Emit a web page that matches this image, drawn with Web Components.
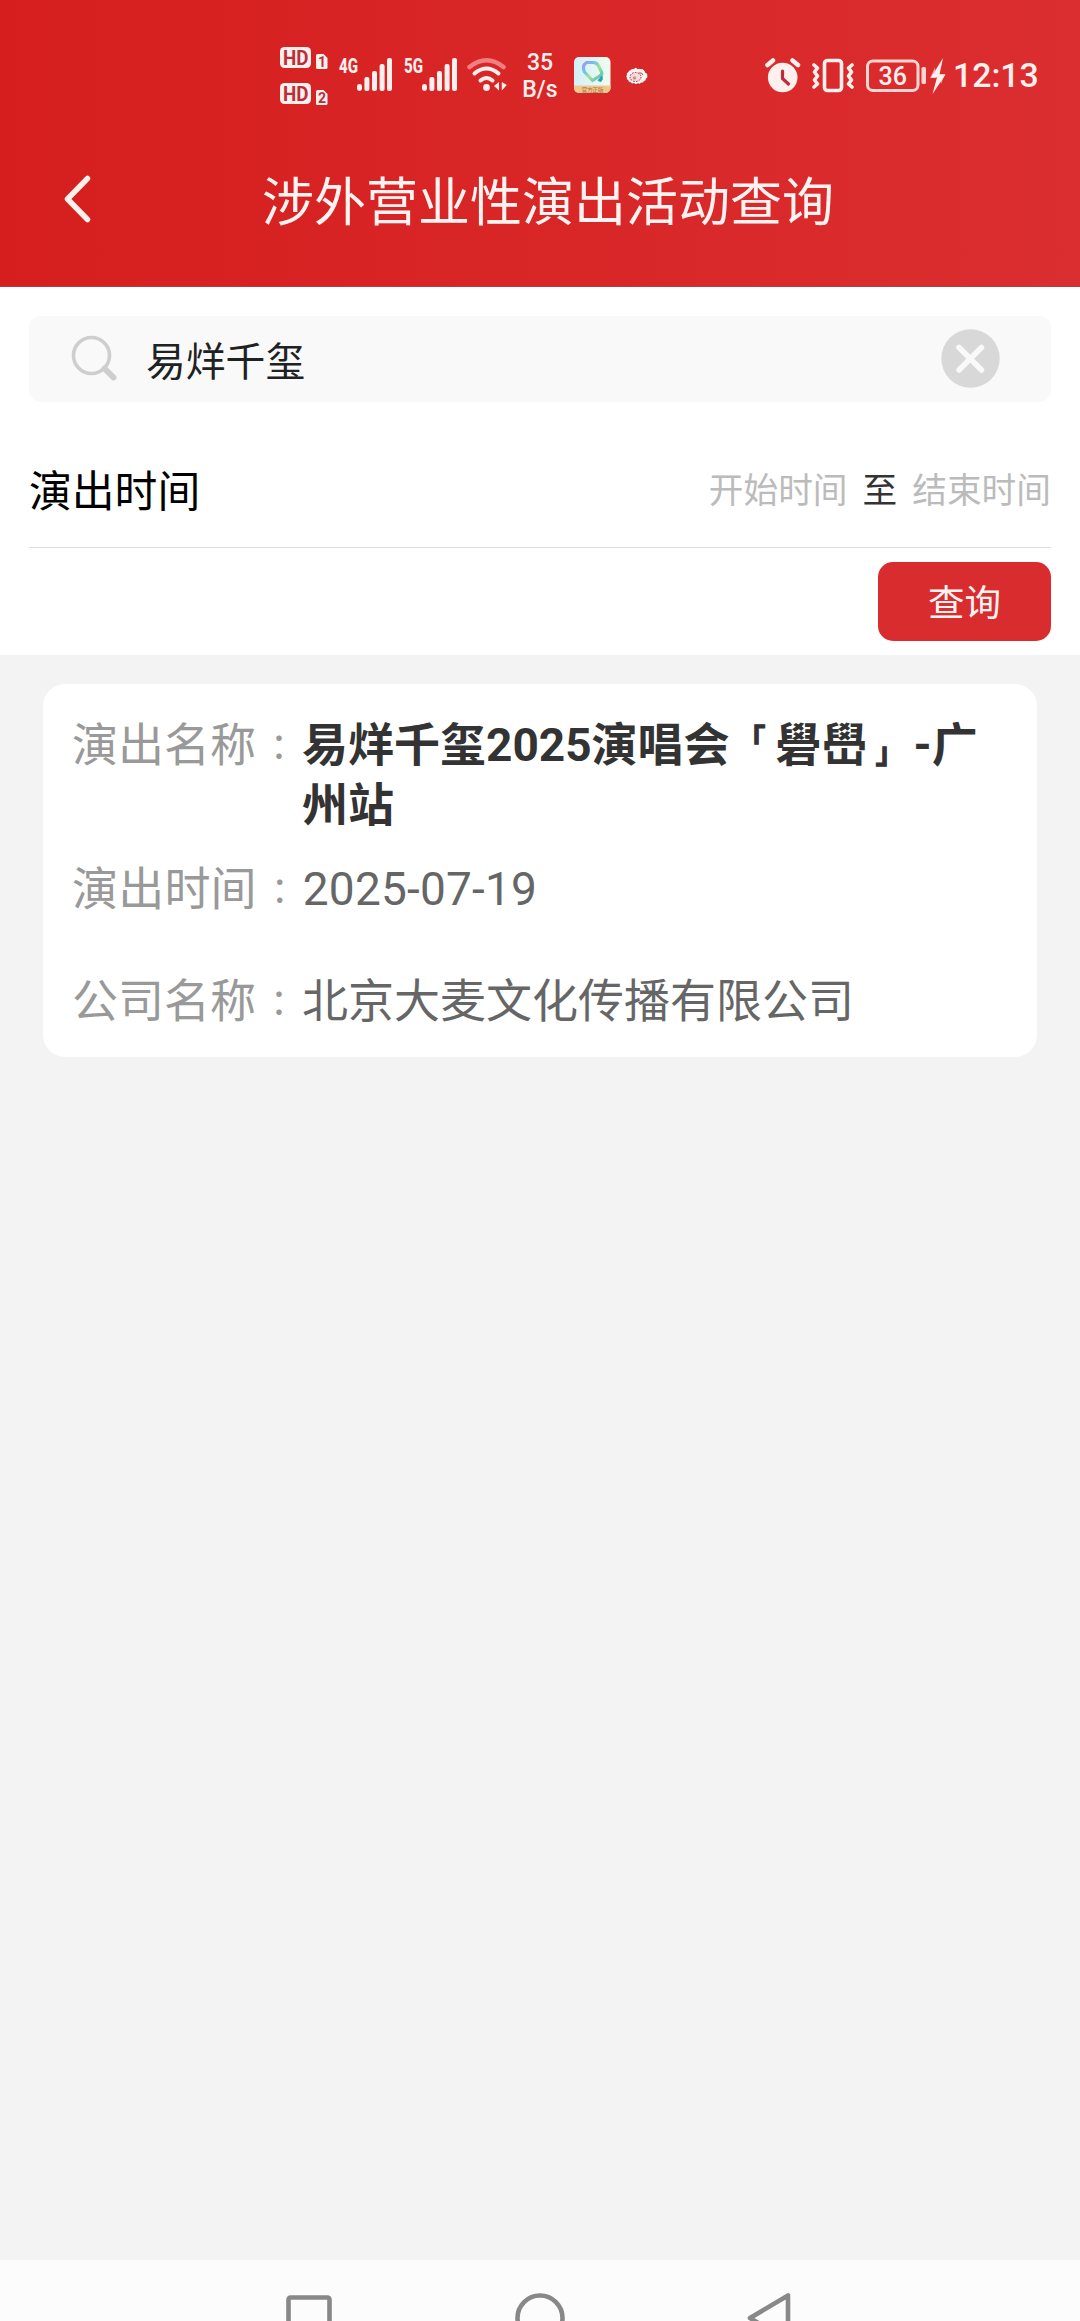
<!DOCTYPE html>
<html lang="zh-CN">
<head>
<meta charset="UTF-8">
<meta name="viewport" content="width=device-width, initial-scale=1">
<title>涉外营业性演出活动查询</title>
<style>
  body {
    margin: 0;
    background: #f3f3f3;
    font-family: Roboto, 'Noto Sans CJK SC', sans-serif;
    text-spacing-trim: space-all;
  }
</style>
</head>
<body>
<query-page></query-page>

<script>
// Small helper: attach an open shadow root with the given markup
function define(name, html, setup) {
  const template = document.createElement('template');
  template.innerHTML = html.trim();

  customElements.define(name, class extends HTMLElement {
    constructor() {
      super();
      this.attachShadow({ mode: 'open' });
      this.shadowRoot.appendChild(template.content.cloneNode(true));
    }

    connectedCallback() {
      if (setup) setup(this, this.shadowRoot);
    }
  });
}

// <signal-bars net="4G">
define('signal-bars', `
<style>
  :host { display: block; width: 53px; height: 60px; }
  svg { display: block; }
</style>
<svg width="53" height="60" viewBox="0 0 53 60" fill="#fff0ee">
  <text id="net" x="0" y="27" font-size="20.5" font-weight="800" textLength="19" lengthAdjust="spacingAndGlyphs"></text>
  <rect x="18" y="38" width="5" height="7" rx="2.4"/>
  <rect x="25.4" y="31" width="5" height="14" rx="2"/>
  <rect x="33" y="25" width="5" height="20" rx="2"/>
  <rect x="40.6" y="18" width="5" height="27" rx="2"/>
  <rect x="48" y="12" width="5" height="33" rx="2"/>
</svg>
`, (host, root) => {
  root.getElementById('net').textContent = host.getAttribute('net');
});

// Phone status bar
define('status-bar', `
<style>
  :host {
    display: flex;
    justify-content: space-between;
    box-sizing: border-box;
    height: 114px;
    padding: 46px 42px 0 280px;
    color: #fff0ee;
  }
  .group { display: flex; }
  svg { display: block; }
  .hd { margin-right: 11px; }
  .sig1 { margin-right: 12px; }
  .sig2 { margin-right: 10px; }
  .speed {
    width: 36px;
    margin: 3px 16px 0 14px;
    font-size: 23px;
    font-weight: 500;
    line-height: 27px;
    text-align: center;
    white-space: nowrap;
  }
  .weibo { margin-left: 14px; }
  .alarm { margin-right: 11px; }
  .vibrate { margin-right: 12px; }
  .battery { margin-right: 3px; }
  .bolt { margin-right: 7px; }
  .clock {
    width: 85px;
    font-size: 33.800px;
    font-weight: 500;
    line-height: 60px;
    white-space: nowrap;
  }
</style>
<div class="group">
  <svg class="hd" width="48" height="60" viewBox="0 0 48 60">
    <g fill="#fff0ee">
      <rect x="0" y="1" width="31" height="21" rx="4.5"/>
      <path d="M36 9.5q0-1.500 1.500-1.500h6l4 4v9.500q0 1.500-1.500 1.500h-8.500q-1.500 0-1.500-1.500z"/>
      <rect x="0" y="37" width="31" height="21" rx="4.500"/>
      <path d="M36 45.500q0-1.500 1.500-1.500h6l4 4v9.500q0 1.500-1.500 1.500h-8.500q-1.500 0-1.500-1.500z"/>
    </g>
    <g fill="#b92f38" font-weight="700">
      <text x="3" y="18.500" font-size="20" textLength="25.500" lengthAdjust="spacingAndGlyphs">HD</text>
      <text x="38" y="20.800" font-size="14">1</text>
      <text x="3" y="54.500" font-size="20" textLength="25.500" lengthAdjust="spacingAndGlyphs">HD</text>
      <text x="38" y="56.800" font-size="14">2</text>
    </g>
  </svg>
  <signal-bars class="sig1" net="4G"></signal-bars>
  <signal-bars class="sig2" net="5G"></signal-bars>
  <svg width="41" height="60" viewBox="0 0 41 60" fill="none" stroke="#fff0ee" stroke-width="4" stroke-linecap="round">
    <path d="M2.500 21Q19.500 7.500 36.500 21" stroke="#ef8080" stroke-width="4.500"/>
    <path d="M7.500 27.500Q19.500 17.500 31.500 27.500"/>
    <path d="M13.500 34.500Q19.500 29.500 25.500 34.500"/>
    <circle cx="19.500" cy="41.500" r="3.400" fill="#fff0ee" stroke="none"/>
    <path d="M32 36v8.500l-5-4.500zM34.800 36v8.500l5-5.500z" fill="#fff0ee" stroke="none"/>
  </svg>
  <div class="speed">35<br>B/s</div>
  <svg width="37" height="60" viewBox="0 0 37 60">
    <defs>
      <linearGradient id="bg" x1="0" y1="0" x2="1" y2="0">
        <stop offset="0" stop-color="#d3f0f6"/>
        <stop offset="1" stop-color="#f1fcef"/>
      </linearGradient>
      <linearGradient id="ring" x1="0" y1="0" x2="1" y2="1">
        <stop offset="0" stop-color="#a695ef"/>
        <stop offset=".3" stop-color="#6cc4ec"/>
        <stop offset=".55" stop-color="#a9df8c"/>
        <stop offset="1" stop-color="#45b8dc"/>
      </linearGradient>
      <clipPath id="tile"><rect x="0" y="11" width="36.500" height="36" rx="5"/></clipPath>
    </defs>
    <g clip-path="url(#tile)">
      <rect y="11" width="37" height="36" fill="url(#bg)"/>
      <rect y="39.500" width="37" height="8" fill="#f2c78e"/>
    </g>
    <path d="M12.500 16.500L19 16.500Q23 16.500 24.500 20L27.500 26Q28.500 29 25.500 30L18.500 34.500L10.500 26Q7.500 20 12.500 16.500z" fill="none" stroke="url(#ring)" stroke-width="3.200" stroke-linejoin="round"/>
    <path d="M24 34.500l4-4.500q1 4-1 5.500z" fill="#26a6a8" stroke="#26a6a8" stroke-width="1"/>
    <text x="7.500" y="45.800" font-size="5.800" fill="#9b7148" textLength="22">官方正版</text>
  </svg>
  <svg class="weibo" width="24" height="60" viewBox="0 0 24 60">
    <path d="M1 30Q2 24 9 22.500Q11 21 13 23Q19 21.500 20 26Q24 28 22 32Q19 38 10.500 38Q2 37 1 30z" fill="#fff0ee" stroke="#8d2427" stroke-width=".7" stroke-dasharray="2 1.500"/>
    <ellipse cx="10.500" cy="31" rx="5.500" ry="4.500" fill="#f8dcdc" stroke="#5b2525" stroke-width=".9" stroke-dasharray="1.500 1.300"/>
    <circle cx="9.500" cy="32" r="1.800" fill="#e08a8a"/>
    <path d="M14 27q3-1 4 2" fill="none" stroke="#7b2b2b" stroke-width=".8"/>
  </svg>
</div>
<div class="group">
  <svg class="alarm" width="36" height="60" viewBox="0 0 36 60">
    <circle cx="17.700" cy="31.500" r="14.800" fill="#fff0ee"/>
    <path d="M2.500 19L8 14.500M33 19L27.500 14.500" fill="none" stroke="#fff0ee" stroke-width="4.500" stroke-linecap="round"/>
    <path d="M17.500 25v7.500l6 5.500" fill="none" stroke="#b92f38" stroke-width="3.200" stroke-linecap="round" stroke-linejoin="round"/>
  </svg>
  <svg class="vibrate" width="42" height="60" viewBox="0 0 42 60" fill="none" stroke="#fff0ee" stroke-linejoin="round" stroke-linecap="round">
    <rect x="12.500" y="14.500" width="17" height="30" rx="3" stroke-width="3.600"/>
    <path d="M2 19l3.500 3-3 4 3 4-3 4 3 4-3.500 3M40 19l-3.500 3 3 4-3 4 3 4-3 4 3.500 3" stroke-width="3.600"/>
  </svg>
  <svg class="battery" width="61" height="60" viewBox="0 0 61 60">
    <rect x="1.500" y="15" width="50.500" height="29.500" rx="5.500" fill="none" stroke="#ffd5d2" stroke-width="3"/>
    <rect x="55.500" y="21" width="4.500" height="17" rx="1.500" fill="#ffd5d2"/>
    <text x="26.700" y="38.500" font-size="25" font-weight="500" text-anchor="middle" fill="#fff0ee">36</text>
  </svg>
  <svg class="bolt" width="16" height="60" viewBox="0 0 16 60" fill="#fff0ee">
    <path d="M13 12L1 31.500H7L2.500 48L15.500 28.500H9.500z"/>
    <path d="M5 21.500L0 32h6zM11 38l4-10H9z" opacity=".6"/>
  </svg>
  <div class="clock">12:13</div>
</div>
`);

// Page header, title goes in the slot
define('nav-header', `
<style>
  :host {
    display: block;
    height: 287px;
    background: linear-gradient(90deg, #d61e1e, #db2e30);
    border-bottom: 1px solid #b04040;
    box-sizing: border-box;
  }
  .row {
    display: grid;
    grid-template-columns: 96px 1fr 80px;
    align-items: center;
    height: 170px;
    color: #fff3f1;
    font-size: 52px;
    text-align: center;
    white-space: nowrap;
  }
  svg { display: block; margin-left: 59px; }
  .title { line-height: 76px; margin-top: 9px; }
</style>
<status-bar></status-bar>
<div class="row">
  <svg width="36" height="56" viewBox="0 0 36 56" fill="none" stroke="#fff0ec" stroke-width="5.500" stroke-linecap="round" stroke-linejoin="round">
    <path d="M28.500 7.500L8.500 28L28.500 48.500"/>
  </svg>
  <div class="title"><slot></slot></div>
</div>
`);

define('search-field', `
<style>
  :host {
    display: flex;
    align-items: center;
    box-sizing: border-box;
    height: 86px;
    padding: 0 51px 0 41px;
    border-radius: 12px;
    background: #f9f9f9;
    color: #202122;
    font-size: 39.800px;
  }
  svg { display: block; }
  .text { flex: 1; margin: 7px 0 0 27px; line-height: 58px; }
</style>
<svg width="49" height="50" viewBox="0 0 49 50" fill="none" stroke="#cecece">
  <circle cx="21.500" cy="21.500" r="18" stroke-width="3.600"/>
  <path d="M34.500 34.500L43.500 43.500" stroke-width="6" stroke-linecap="round"/>
</svg>
<div class="text"><slot></slot></div>
<svg width="60" height="60" viewBox="0 0 60 60">
  <circle cx="30.500" cy="29.500" r="29.200" fill="#d8d8d8"/>
  <path d="M19 18.500L41.500 41M41.500 18.500L19 41" stroke="#f9f9f9" stroke-width="5.500" stroke-linecap="round"/>
</svg>
`);

define('date-range', `
<style>
  :host {
    display: flex;
    align-items: center;
    justify-content: space-between;
    box-sizing: border-box;
    height: 146px;
    padding-top: 34px;
    border-bottom: 1px solid #dcdcdc;
  }
  .label { color: #000; font-size: 42.800px; line-height: 60px; }
  .range {
    display: flex;
    gap: 15px;
    margin-top: -2px;
    color: #bbb;
    font-size: 34.700px;
    line-height: 50px;
  }
  .to { color: #333; }
</style>
<div class="label"><slot></slot></div>
<div class="range">
  <span>开始时间</span>
  <span class="to">至</span>
  <span>结束时间</span>
</div>
`);

define('query-button', `
<style>
  :host { display: block; }
  button {
    display: block;
    width: 173px;
    height: 79px;
    padding: 4px 0 0;
    border: none;
    border-radius: 15px;
    background: #d92c2f;
    color: #fff3f1;
    font: 36.500px/52px Roboto, 'Noto Sans CJK SC', sans-serif;
    cursor: pointer;
  }
</style>
<button type="button"><slot></slot></button>
`);

// <info-row label="..."> value </info-row>
define('info-row', `
<style>
  :host {
    display: flex;
    font-size: 46px;
    line-height: 60px;
    color: #666;
  }
  :host([strong]) .value { color: #333; font-weight: 700; }
  .label { display: flex; align-items: baseline; flex: none; color: #999; }
  /* centred full-width colon */
  .colon {
    width: 46px;
    text-align: center;
    font-family: Roboto, 'Noto Sans CJK TC', sans-serif;
    font-size: 36px;
    line-height: 1;
  }
  .value { flex: 1; }
</style>
<div class="label"><span class="name"></span><span class="colon" lang="zh-TW">：</span></div>
<div class="value"><slot></slot></div>
`, (host, root) => {
  root.querySelector('.name').textContent = host.getAttribute('label');
});

// Corner bracket, smaller than the glyphs around it
define('corner-mark', `
<style>
  :host { font-size: 30px; line-height: 1; -webkit-text-stroke: 1px currentColor; }
  :host([open]) { margin: 0 10px 0 6px; vertical-align: 11px; }
  :host([close]) { margin: 0 8px; vertical-align: -2px; }
</style><slot></slot>
`);

define('result-card', `
<style>
  :host {
    display: flex;
    flex-direction: column;
    box-sizing: border-box;
    height: 373px;
    margin: 29px 43px 0;
    padding: 31px 30px 0 29px;
    border-radius: 22px;
    background: #fff;
  }
</style>
<slot></slot>
`);

// Android system navigation, cut by the bottom edge
define('system-nav', `
<style>
  :host {
    display: flex;
    justify-content: space-between;
    box-sizing: border-box;
    height: 61px;
    padding: 31px 289px 0 285px;
    background: #fcfcfc;
    overflow: hidden;
  }
  svg { display: block; flex: none; }
</style>
<svg width="48" height="30" fill="none" stroke="#888" stroke-width="4.600"><rect x="3.500" y="6.500" width="41" height="41" rx="2"/></svg>
<svg width="52" height="30" fill="none" stroke="#888" stroke-width="4.600"><circle cx="26" cy="27" r="22.500"/></svg>
<svg width="44" height="30" fill="none" stroke="#888" stroke-width="4.600" stroke-linejoin="round"><path d="M41 4.500V50L3 27z"/></svg>
`);

define('query-page', `
<style>
  :host {
    display: flex;
    flex-direction: column;
    height: 2321px;
    overflow: hidden;
  }
  .filters {
    box-sizing: border-box;
    height: 368px;
    padding: 29px 29px 0;
    background: #fff;
  }
  .actions { display: flex; justify-content: flex-end; padding-top: 14px; }
  .gap-s { margin-top: 24px; letter-spacing: .2px; }
  .gap-l { margin-top: 52px; }
  main { flex: 1; }
</style>
<nav-header>涉外营业性演出活动查询</nav-header>
<section class="filters">
  <search-field>易烊千玺</search-field>
  <date-range>演出时间</date-range>
  <div class="actions"><query-button>查询</query-button></div>
</section>
<main>
  <result-card>
    <info-row strong label="演出名称">易烊千玺2025演唱会<corner-mark open>「</corner-mark>礐嶨<corner-mark close>」</corner-mark>-广州站</info-row>
    <info-row class="gap-s" label="演出时间">2025-07-19</info-row>
    <info-row class="gap-l" label="公司名称">北京大麦文化传播有限公司</info-row>
  </result-card>
</main>
<system-nav></system-nav>
`);
</script>
</body>
</html>
